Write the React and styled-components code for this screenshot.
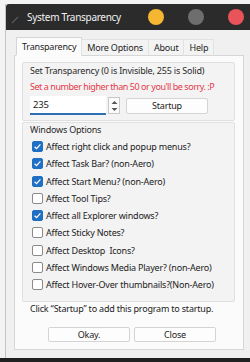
import React from 'react';
import styled, { createGlobalStyle } from 'styled-components';

const Global = createGlobalStyle`
  html, body {
    margin: 0;
    padding: 0;
    background: #f3f3f3;
  }
  * {
    box-sizing: border-box;
  }
`;

const options = [
  { label: 'Affect right click and popup menus?', checked: true },
  { label: 'Affect Task Bar? (non-Aero)', checked: true },
  { label: 'Affect Start Menu? (non-Aero)', checked: true },
  { label: 'Affect Tool Tips?', checked: false },
  { label: 'Affect all Explorer windows?', checked: true },
  { label: 'Affect Sticky Notes?', checked: false },
  { label: 'Affect Desktop\u00a0 Icons?', checked: false },
  { label: 'Affect Windows Media Player? (non-Aero)', checked: false },
  { label: 'Affect Hover-Over thumbnails?(Non-Aero)', checked: false },
];

const tabs = ['Transparency', 'More Options', 'About', 'Help'];

function CheckBox({ checked }) {
  return (
    <Box $checked={checked}>
      {checked && (
        <svg width="9" height="9" viewBox="0 0 9 9">
          <path d="M1.6 4.7 L3.6 6.6 L7.4 2.4" fill="none" stroke="#fff" strokeWidth="1.3" />
        </svg>
      )}
    </Box>
  );
}

function App() {
  return (
    <Page>
      <Global />
      <Window>
        <TitleBar>
          <AppIcon width="8" height="8" viewBox="0 0 8 8">
            <path d="M1 7 L7 1" stroke="#555" strokeWidth="1.4" />
          </AppIcon>
          <Title>System Transparency</Title>
          <Lights>
            <Light $color="#f5b731" />
            <Light $color="#6e6e6e" />
            <Light $color="#e9545a" />
          </Lights>
        </TitleBar>
        <Body>
          <TabStrip>
            {tabs.map((t, i) => (
              <Tab key={t} $active={i === 0}>
                {t}
              </Tab>
            ))}
          </TabStrip>
          <TabPage>
            <Group>
              <GroupTitle>Set Transparency (0 is Invisible, 255 is Solid)</GroupTitle>
              <Warning>Set a number higher than 50 or you'll be sorry. :P</Warning>
              <InputRow>
                <NumberField>235</NumberField>
                <Spinner>
                  <svg width="7" height="14" viewBox="0 0 7 14">
                    <path d="M0.5 5 L3.5 2 L6.5 5 Z" fill="#555" />
                    <path d="M0.5 9 L3.5 12 L6.5 9 Z" fill="#555" />
                  </svg>
                </Spinner>
                <StartupButton>Startup</StartupButton>
              </InputRow>
            </Group>
            <Group $tall>
              <GroupTitle>Windows Options</GroupTitle>
              <OptionList>
                {options.map((o) => (
                  <Option key={o.label}>
                    <CheckBox checked={o.checked} />
                    <span>{o.label}</span>
                  </Option>
                ))}
              </OptionList>
            </Group>
            <Hint>Click “Startup” to add this program to startup.</Hint>
            <Buttons>
              <DialogButton>Okay.</DialogButton>
              <DialogButton>Close</DialogButton>
            </Buttons>
          </TabPage>
        </Body>
      </Window>
      <Taskbar />
    </Page>
  );
}

export default App;

const Page = styled.div`
  width: 250px;
  height: 362px;
  display: flex;
  flex-direction: column;
  padding-top: 4px;
  font-family: 'Noto Sans', 'Open Sans', sans-serif;
  font-size: 9px;
  letter-spacing: -0.2px;
  color: #222;
`;

const Window = styled.div`
  flex: 1;
  margin-left: 5px;
  display: flex;
  flex-direction: column;
  border-left: 1px solid #c4c4c4;
  background: #f0f0f0;
`;

const TitleBar = styled.div`
  height: 26px;
  flex-shrink: 0;
  background: #2b2b2b;
  display: flex;
  align-items: center;
  padding-left: 5px;
  border-radius: 3px 0 0 0;
`;

const AppIcon = styled.svg`
  margin-right: 8px;
  margin-top: 5px;
`;

const Title = styled.span`
  color: #f2f2f2;
  font-size: 10px;
  letter-spacing: -0.3px;
  flex: 1;
`;

const Lights = styled.div`
  display: flex;
  gap: 24px;
  width: 102px;
`;

const Light = styled.span`
  width: 16px;
  height: 16px;
  border-radius: 50%;
  background: ${(p) => p.$color};
`;

const Body = styled.div`
  flex: 1;
  padding: 7px 6px 8px 8px;
  display: flex;
  flex-direction: column;
  min-height: 0;
`;

const TabStrip = styled.div`
  display: flex;
  padding-left: 3px;
  height: 19px;
  flex-shrink: 0;
  align-items: flex-end;
  position: relative;
  z-index: 1;
`;

const Tab = styled.div`
  height: ${(p) => (p.$active ? '19px' : '17px')};
  padding: 0 5px;
  display: flex;
  align-items: center;
  background: ${(p) => (p.$active ? '#fbfbfb' : '#f3f3f3')};
  border: 1px solid ${(p) => (p.$active ? '#d6d6d6' : '#e2e2e2')};
  border-bottom: 1px solid ${(p) => (p.$active ? '#fbfbfb' : '#d6d6d6')};
  margin-left: -1px;
  color: #1e1e1e;
`;

const TabPage = styled.div`
  flex: 1;
  margin-top: -1px;
  background: #fbfbfb;
  border: 1px solid #d6d6d6;
  padding: 6px 8px 7px 7px;
  display: flex;
  flex-direction: column;
`;

const Group = styled.div`
  background: #f3f3f3;
  border: 1px solid #e0e0e0;
  border-radius: 2px;
  padding: ${(p) => (p.$tall ? '0 7px' : '1px 7px 5px 7px')};
  margin-top: ${(p) => (p.$tall ? '1px' : '0')};
  height: ${(p) => (p.$tall ? '180px' : '59px')};
  flex-shrink: 0;
`;

const GroupTitle = styled.div`
  line-height: 13px;
  color: #2a2a2a;
  white-space: nowrap;
`;

const Warning = styled.div`
  color: #e5394a;
  line-height: 14px;
  margin-top: 3px;
  letter-spacing: -0.45px;
  white-space: nowrap;
`;

const InputRow = styled.div`
  display: flex;
  align-items: center;
  margin-top: 2px;
`;

const NumberField = styled.div`
  width: 76px;
  height: 19px;
  background: #fff;
  border-bottom: 2px solid #2f6fb3;
  padding-left: 3px;
  display: flex;
  align-items: center;
  font-size: 9.5px;
`;

const Spinner = styled.div`
  width: 12px;
  height: 17px;
  margin-left: 2px;
  border: 1px solid #c8c8c8;
  background: #fbfbfb;
  display: flex;
  align-items: center;
  justify-content: center;
`;

const StartupButton = styled.div`
  width: 82px;
  height: 16px;
  margin-left: 6px;
  background: #fdfdfd;
  border: 1px solid #d4d4d4;
  border-radius: 2px;
  display: flex;
  align-items: center;
  justify-content: center;
`;

const OptionList = styled.div`
  display: flex;
  flex-direction: column;
  gap: 6.3px;
  margin-top: 5px;
  padding-left: 2px;
`;

const Option = styled.div`
  display: flex;
  align-items: center;
  gap: 3px;
  line-height: 11px;
  white-space: nowrap;
  color: #222;
`;

const Box = styled.span`
  width: 11px;
  height: 11px;
  border-radius: 2px;
  flex-shrink: 0;
  display: flex;
  align-items: center;
  justify-content: center;
  background: ${(p) => (p.$checked ? '#1f6fc5' : '#fff')};
  border: 1px solid ${(p) => (p.$checked ? '#1f6fc5' : '#8a8a8a')};
`;

const Hint = styled.div`
  margin-top: 1px;
  padding-left: 8px;
  line-height: 12px;
  white-space: nowrap;
`;

const Buttons = styled.div`
  display: flex;
  gap: 4px;
  margin-top: 12px;
  padding-left: 26px;
`;

const DialogButton = styled.div`
  width: 82px;
  height: 15px;
  background: #fdfdfd;
  border: 1px solid #d4d4d4;
  border-radius: 2px;
  display: flex;
  align-items: center;
  justify-content: center;
`;

const Taskbar = styled.div`
  height: 4px;
  flex-shrink: 0;
  background: #202020;
`;
